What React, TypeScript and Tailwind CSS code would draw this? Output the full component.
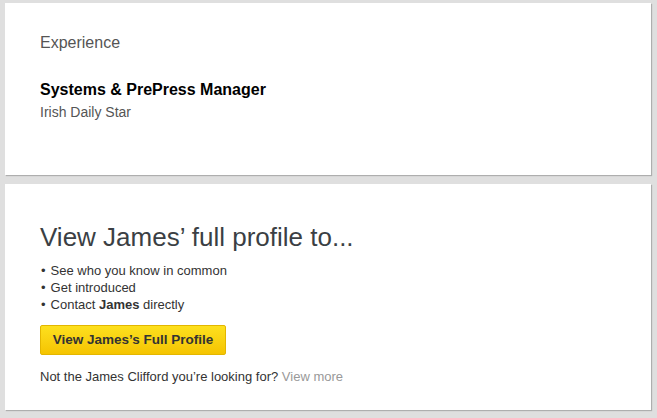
export default function App() {
  return (
    <div
      className="w-[657px] h-[418px] bg-[#dfdfdf] pt-[3px] pl-[5px] pr-[6px]"
      style={{ fontFamily: '"Liberation Sans", Arial, sans-serif' }}
    >
      {/* Experience */}
      <section className="bg-white h-[172px] px-[35px] pt-[30px] shadow-[1px_1px_1px_rgba(0,0,0,0.22)]">
        <h2 className="text-[16px] leading-[20px] text-[#555]">Experience</h2>
        <div className="mt-[27px]">
          <p className="text-[16px] leading-[20px] font-bold text-black">Systems &amp; PrePress Manager</p>
          <p className="mt-[3px] text-[14px] leading-[18px] text-[#555]">Irish Daily Star</p>
        </div>
      </section>

      {/* Upsell */}
      <section className="bg-white mt-[9px] h-[226px] px-[35px] pt-[37px] shadow-[1px_1px_1px_rgba(0,0,0,0.22)]">
        <h2 className="text-[26px] leading-[32px] text-[#3b3f44]">View James’ full profile to...</h2>
        <ul className="mt-[9px] text-[13px] leading-[17px] text-[#333]">
          <li className="flex gap-[5px] pl-[1px]">
            <span>•</span>
            <span>See who you know in common</span>
          </li>
          <li className="flex gap-[5px] pl-[1px]">
            <span>•</span>
            <span>Get introduced</span>
          </li>
          <li className="flex gap-[5px] pl-[1px]">
            <span>•</span>
            <span>
              Contact <b>James</b> directly
            </span>
          </li>
        </ul>
        <button className="mt-[12px] h-[30px] w-[186px] rounded-[2px] border border-[#e3b600] bg-gradient-to-b from-[#fde01d] to-[#f5c400] text-[13.5px] font-bold text-[#333]">
          View James’s Full Profile
        </button>
        <p className="mt-[13px] text-[13px] leading-[17px] text-[#333]">
          Not the James Clifford you’re looking for? <span className="text-[#999]">View more</span>
        </p>
      </section>
    </div>
  )
}
